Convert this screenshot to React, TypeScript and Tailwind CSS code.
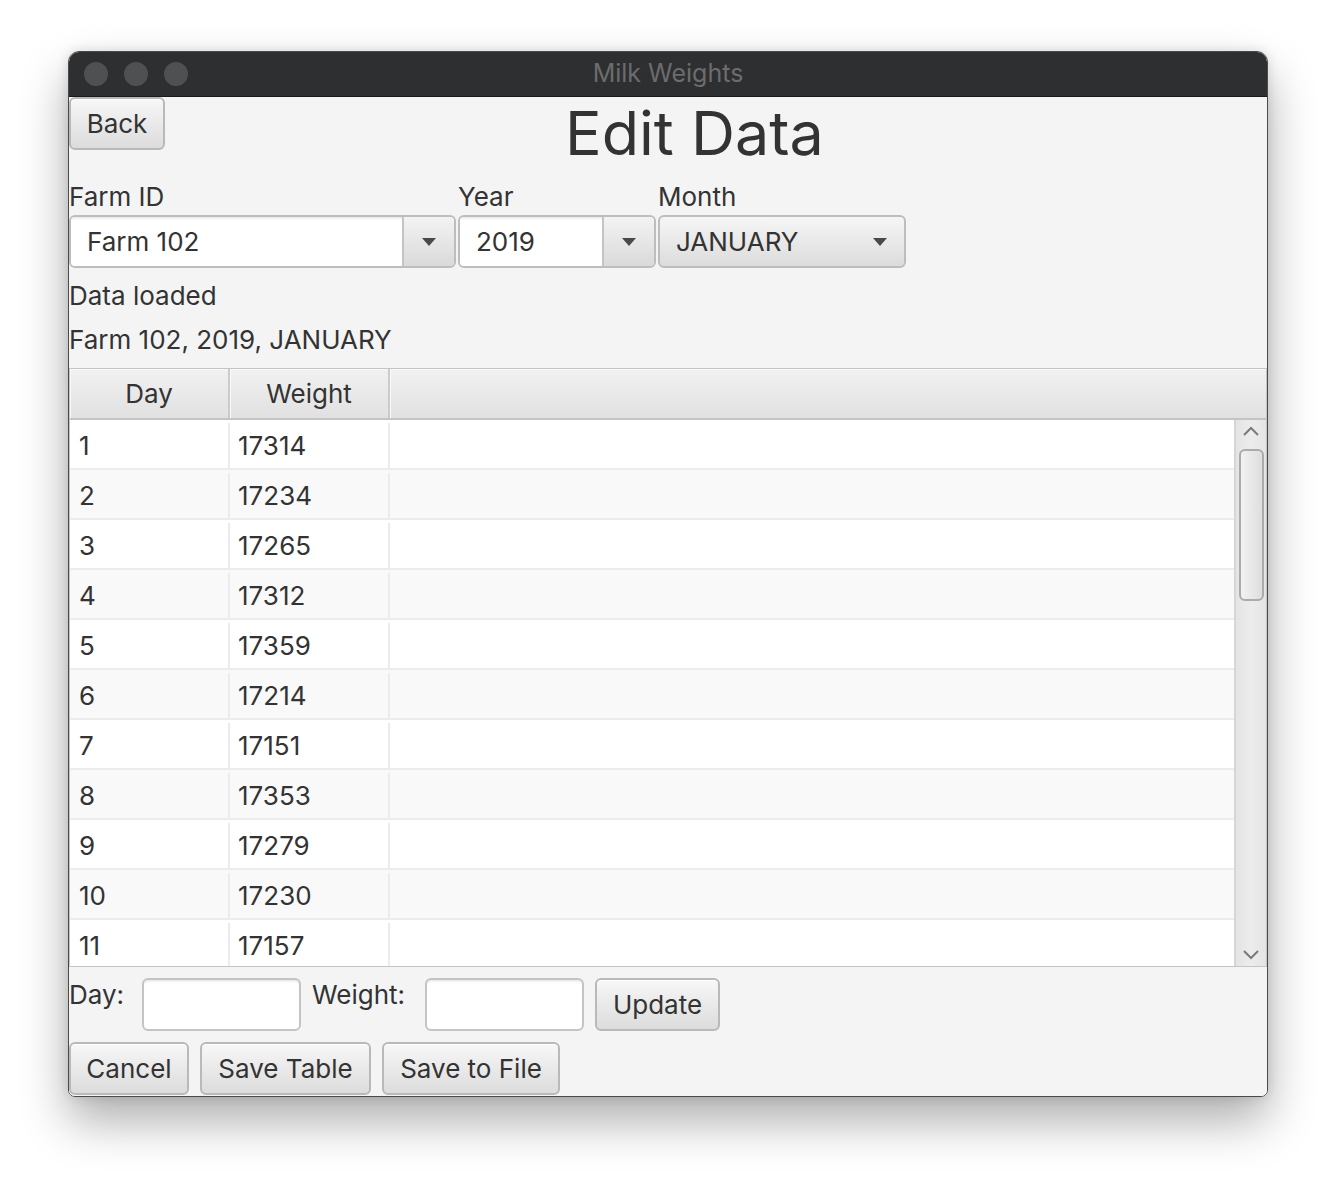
import React from 'react';

const font = { fontFamily: 'Inter, "Noto Sans", "Liberation Sans", sans-serif' };

const rows: [number, number][] = [
    [1, 17314],
    [2, 17234],
    [3, 17265],
    [4, 17312],
    [5, 17359],
    [6, 17214],
    [7, 17151],
    [8, 17353],
    [9, 17279],
    [10, 17230],
    [11, 17157],
];

function Arrow() {
    return (
        <svg width="14" height="8" viewBox="0 0 14 8">
            <path d="M0 0 L14 0 L7 8 Z" fill="#4a4a4a" />
        </svg>
    );
}

function FxButton({ children, className = '' }: { children: React.ReactNode; className?: string }) {
    return (
        <button
            className={`h-[53px] rounded-[6px] border-2 border-[#b9b9b9] bg-gradient-to-b from-[#f7f7f7] to-[#dcdcdc] text-[26px] text-[#333] shadow-[inset_0_1px_0_#ffffff] ${className}`}
        >
            {children}
        </button>
    );
}

function Combo({ value, width, arrowW = 52 }: { value: string; width: number; arrowW?: number }) {
    return (
        <div
            className="flex h-[53px] overflow-hidden rounded-[6px] border-2 border-[#bdbdbd]"
            style={{ width }}
        >
            <div className="flex flex-1 items-center bg-white pl-[16px] text-[26px] text-[#333] shadow-[inset_0_3px_3px_-2px_rgba(0,0,0,0.12)]">
                {value}
            </div>
            <div
                className="flex items-center justify-center border-l-2 border-[#c4c4c4] bg-gradient-to-b from-[#f3f3f3] to-[#dadada]"
                style={{ width: arrowW }}
            >
                <Arrow />
            </div>
        </div>
    );
}

export default function App() {
    return (
        <div className="min-h-[1180px] bg-white pt-[51px]" style={font}>
            <div className="mx-auto w-[1200px] overflow-hidden rounded-t-[11px] rounded-b-[7px] border border-[#4a4a4a] shadow-[0_24px_48px_rgba(0,0,0,0.32),0_0_12px_rgba(0,0,0,0.12)]">
                {/* Title bar */}
                <div className="relative flex h-[44px] items-center bg-[#2e2f31] pl-[15px]">
                    <div className="flex gap-[16px]">
                        <span className="h-[24px] w-[24px] rounded-full bg-[#4f5052]" />
                        <span className="h-[24px] w-[24px] rounded-full bg-[#4f5052]" />
                        <span className="h-[24px] w-[24px] rounded-full bg-[#4f5052]" />
                    </div>
                    <div className="absolute inset-0 flex items-center justify-center text-[25px] text-[#6c6c6d]">
                        Milk Weights
                    </div>
                </div>

                {/* Content */}
                <div className="h-[1000px] border-t border-[#1a1a1a] bg-[#f4f4f4] text-[#333]">
                    <div className="flex items-start">
                        <FxButton className="w-[96px]">Back</FxButton>
                        <div className="ml-[400px] mt-[1px] text-[61px] leading-[70px]">Edit Data</div>
                    </div>

                    <div className="mt-[14px] flex gap-[2px]">
                        <div className="flex flex-col">
                            <div className="h-[33px] text-[26px] leading-[30px]">Farm ID</div>
                            <Combo value="Farm 102" width={387} />
                        </div>
                        <div className="flex flex-col">
                            <div className="h-[33px] text-[26px] leading-[30px]">Year</div>
                            <Combo value="2019" width={198} />
                        </div>
                        <div className="flex flex-col">
                            <div className="h-[33px] text-[26px] leading-[30px]">Month</div>
                            <div className="flex h-[53px] w-[248px] items-center justify-between rounded-[6px] border-2 border-[#bdbdbd] bg-gradient-to-b from-[#f6f6f6] to-[#dcdcdc] pl-[16px] pr-[17px] text-[26px]">
                                <span>JANUARY</span>
                                <Arrow />
                            </div>
                        </div>
                    </div>

                    <div className="mt-[13px] text-[26px] leading-[30px]">Data loaded</div>
                    <div className="mt-[14px] text-[26px] leading-[30px]">Farm 102, 2019, JANUARY</div>

                    {/* Table */}
                    <div className="mt-[13px] border border-[#c4c4c4]">
                        <div className="flex h-[51px] border-b-2 border-[#c4c4c4] bg-gradient-to-b from-[#f1f1f1] to-[#e1e1e1] text-[26px]">
                            <div className="flex w-[160px] items-center justify-center border-r-2 border-[#cbcbcb] shadow-[inset_1px_1px_0_#fafafa]">
                                Day
                            </div>
                            <div className="flex w-[160px] items-center justify-center border-r-2 border-[#cbcbcb] shadow-[inset_1px_1px_0_#fafafa]">
                                Weight
                            </div>
                            <div className="flex-1 shadow-[inset_1px_1px_0_#fafafa]" />
                        </div>
                        <div className="flex h-[546px]">
                            <div className="flex-1 overflow-hidden">
                                {rows.map(([d, w], i) => (
                                    <div
                                        key={d}
                                        className={`flex h-[50px] border-b-2 border-[#ececec] pt-[3px] text-[26px] ${i % 2 === 0 ? 'bg-white' : 'bg-[#f9f9f9]'}`}
                                    >
                                        <div className="flex w-[160px] items-center border-r-2 border-[#ececec] pl-[9px]">{d}</div>
                                        <div className="flex w-[160px] items-center border-r-2 border-[#ececec] pl-[8px]">{w}</div>
                                        <div className="flex-1" />
                                    </div>
                                ))}
                            </div>
                            {/* Scrollbar */}
                            <div className="flex w-[32px] flex-col items-center border-l-2 border-[#d6d6d6] bg-gradient-to-r from-[#e4e4e4] via-[#ececec] to-[#e4e4e4]">
                                <svg width="16" height="10" viewBox="0 0 16 10" className="mt-[6px]">
                                    <path d="M1 9 L8 2 L15 9" stroke="#7a7a7a" strokeWidth="2" fill="none" />
                                </svg>
                                <div className="mt-[13px] h-[152px] w-[25px] rounded-[6px] border-2 border-[#ababab] bg-gradient-to-r from-[#f2f2f2] to-[#dedede]" />
                                <div className="flex-1" />
                                <svg width="16" height="10" viewBox="0 0 16 10" className="mb-[6px]">
                                    <path d="M1 1 L8 8 L15 1" stroke="#7a7a7a" strokeWidth="2" fill="none" />
                                </svg>
                            </div>
                        </div>
                    </div>

                    {/* Edit row */}
                    <div className="mt-[11px] flex items-start">
                        <div className="mt-[2px] w-[73px] text-[26px] leading-[30px]">Day:</div>
                        <div className="h-[53px] w-[159px] rounded-[6px] border-2 border-[#c4c4c4] bg-white shadow-[inset_0_3px_3px_-2px_rgba(0,0,0,0.12)]" />
                        <div className="ml-[11px] mt-[2px] w-[113px] text-[26px] leading-[30px]">Weight:</div>
                        <div className="h-[53px] w-[159px] rounded-[6px] border-2 border-[#c4c4c4] bg-white shadow-[inset_0_3px_3px_-2px_rgba(0,0,0,0.12)]" />
                        <FxButton className="ml-[11px] w-[125px]">Update</FxButton>
                    </div>

                    <div className="mt-[11px] flex gap-[11px]">
                        <FxButton className="w-[120px]">Cancel</FxButton>
                        <FxButton className="w-[171px]">Save Table</FxButton>
                        <FxButton className="w-[178px]">Save to File</FxButton>
                    </div>
                </div>
            </div>
        </div>
    );
}
